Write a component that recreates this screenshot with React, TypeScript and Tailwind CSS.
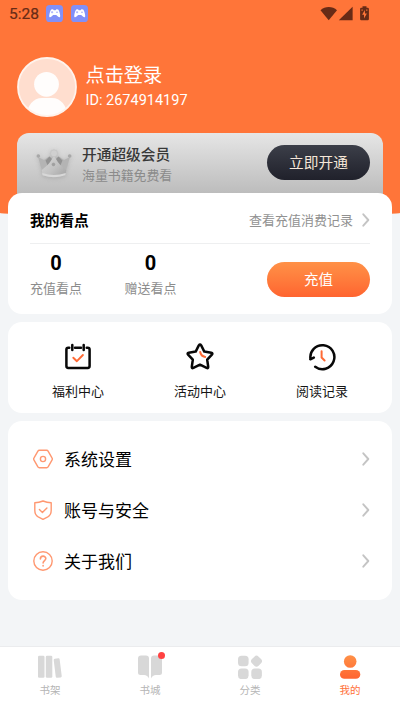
import React from 'react';

function Gamepad() {
  return (
    <svg className="size-[17px]" viewBox="0 0 17 17">
      <rect width="17" height="17" rx="3.6" fill="#8190f8" />
      <path
        d="M5.2 4.4 7 4.3l.8.9h1.8l.8-.9 1.8.1c1 1.500 2 4.500 2 6.600 0 1.500-1.200 1.500-2 .8l-2-1.900H7.200l-2 1.900c-.8.7-2 .7-2-.8 0-2.100 1-5.100 2-6.600Z"
        fill="#fff"
      />
      <path d="M5 7.200h2.200M6.100 6.100v2.200" stroke="#8190f8" strokeWidth=".6" />
      <circle cx="11" cy="7.200" r=".7" fill="#8190f8" />
    </svg>
  );
}

function StatusBar() {
  return (
    <div className="flex h-[28px] items-center pl-[9px] pr-[30px] text-[#672b16]">
      <span className="w-[36.500px] text-[15.500px] leading-[28px] [-webkit-text-stroke:0.2px]">5:28</span>
      <div className="flex gap-[8px] pb-[2px]">
        <Gamepad />
        <Gamepad />
      </div>
      <svg className="ml-auto h-[16px] w-[50px]" viewBox="0 0 50 16" fill="currentColor">
        <path d="M.5 4.200C5-.2 12.500-.2 17 4.200L8.700 14.300Z" />
        <path d="M32.600.800V14.300H18.800Z" />
        <path d="M42.500.200h4v1.500h1.200q1.200 0 1.200 1.200v10.200q0 1.200-1.200 1.200h-6.500q-1.100 0-1.100-1.200V2.900q0-1.200 1.100-1.200h1.300Z" />
        <path d="m44.800 4-2.700 4.700h1.900v3.700l2.900-5H45Z" fill="#ff7539" />
        <path d="M41.500 3.500h1.200v1.200h-1.200zM46.200 3.500h1.200v1.200h-1.200z" fill="#ff7539" />
      </svg>
    </div>
  );
}

function Avatar() {
  return (
    <svg className="size-[60px] shrink-0" viewBox="0 0 60 60">
      <defs>
        <clipPath id="face">
          <circle cx="30" cy="30" r="29" />
        </clipPath>
      </defs>
      <circle cx="30" cy="30" r="29" fill="#ffdecf" />
      <g clipPath="url(#face)" fill="#fffdfc">
        <circle cx="29.500" cy="27.300" r="12.400" />
        <path d="M9 60c1-11 7-19 16-19h10c9 0 15 8 16 19Z" />
      </g>
      <circle cx="30" cy="30" r="29" fill="none" stroke="#fff3ec" strokeWidth="1.800" />
    </svg>
  );
}

function Crown() {
  return (
    <svg className="h-[36px] w-[40px] shrink-0 drop-shadow-[0_1px_2px_rgba(110,110,110,.3)]" viewBox="0 0 40 36">
      <defs>
        <linearGradient id="crownFront" x1="0" y1="0" x2="1" y2="1">
          <stop offset="0" stopColor="#dadada" />
          <stop offset=".55" stopColor="#c2c2c2" />
          <stop offset="1" stopColor="#a2a2a2" />
        </linearGradient>
      </defs>
      <path d="m4 12 6 3 5-3.500 5 2 5-2 5 3.500 6-3-4.500 15H8.500Z" fill="#b4b4b4" />
      <path d="m11.500 15.500 4-4 3.500 3.500-5 6.500ZM28.500 15.500l-4-4-3.500 3.500 5 6.500Z" fill="#939393" />
      <path d="M20 10C17.500 16.500 12.500 21.500 7.800 25l.7 5q11 4.500 23 0l.7-5C27.500 21.500 22.500 16.500 20 10Z" fill="url(#crownFront)" />
      <path d="M8.200 28q11.800 4.200 23.600 0l-.3 2.200q-11.500 4.200-23 0Z" fill="#d8d8d8" />
      <circle cx="20" cy="8.300" r="3.500" fill="#d0d0d0" stroke="#bfbfbf" strokeWidth=".6" />
      <circle cx="4.300" cy="11" r="1.800" fill="#a8a8a8" />
      <circle cx="35.700" cy="11" r="1.800" fill="#a8a8a8" />
      <circle cx="19.500" cy="19.500" r="2.200" fill="#a0a0a0" stroke="#d2d2d2" strokeWidth=".6" />
    </svg>
  );
}

function Chevron() {
  return (
    <svg className="h-[14px] w-[8px] shrink-0" viewBox="0 0 8 14" fill="none">
      <path d="m1.300 1.300 5 5.700-5 5.700" stroke="#c4c4c4" strokeWidth="1.900" strokeLinecap="round" strokeLinejoin="round" />
    </svg>
  );
}

const shortcuts = [
  {
    label: '福利中心',
    icon: (
      <>
        <path d="M5.300 4.700H4.300Q2.400 4.700 2.400 6.600v16.500q0 1.900 1.900 1.900h19.400q1.900 0 1.900-1.900V6.600q0-1.900-1.900-1.900h-1M11 4.700h6" />
        <path d="M8.300 2v5M19.700 2v5" />
        <path d="m9.300 14.700 3.600 3.500 6-6.200" stroke="#ff6a35" strokeWidth="1.900" />
      </>
    ),
  },
  {
    label: '活动中心',
    icon: (
      <>
        <path d="M12.800 2.400q1.200-1.700 2.400 0l3.100 6.200 6.900 1.100q2 .4.700 1.900l-4.700 5.100 1 7q.2 2-1.600 1.200L14 21.700l-6.600 3.200q-1.800.8-1.600-1.200l1-7-4.700-5.100q-1.300-1.500.7-1.900l6.900-1.100Z" />
        <path d="M14.200 9q.7 4.200 5 4.900" stroke="#ff6a35" strokeWidth="2" />
      </>
    ),
  },
  {
    label: '阅读记录',
    icon: (
      <>
        <path d="M2.500 16A12 12 0 1 1 7.200 23.800M2.300 16.300l3.500-1.700" />
        <path d="M13.600 8.200v6.300l3 3" stroke="#ff6a35" strokeWidth="2" />
      </>
    ),
  },
];

const settings = [
  {
    label: '系统设置',
    icon: (
      <>
        <path d="M6.300 1.300h7.400q.9 0 1.400.8l4 7.100q.5.800 0 1.600l-4 7.100q-.5.800-1.400.8H6.300q-.9 0-1.400-.8l-4-7.100q-.5-.8 0-1.600l4-7.100q.5-.8 1.400-.8Z" />
        <circle cx="10" cy="10" r="2.600" />
      </>
    ),
  },
  {
    label: '账号与安全',
    icon: (
      <>
        <path d="M10 1q4 1.700 8.200 1.700v7.600q0 4.700-3.400 6.600L10 19.300l-4.800-2.400q-3.400-1.900-3.400-6.600V2.700Q6 2.700 10 1Z" />
        <path d="m6.400 9.600 3 2.900 4.500-4.500" />
      </>
    ),
  },
  {
    label: '关于我们',
    icon: (
      <>
        <circle cx="10" cy="10" r="9.200" />
        <path d="M7.400 7.900c0-3.700 5.400-3.500 5.400-.3 0 2-2.700 2.100-2.700 4.400M10.100 14.600v.4" strokeWidth="1.600" />
      </>
    ),
  },
];

const tabs = [
  {
    label: '书架',
    icon: (
      <>
        <rect x="0" y=".8" width="6.500" height="22" rx="1.200" />
        <rect x="7.800" y=".8" width="6.500" height="22" rx="1.200" />
        <rect x="16.700" y="3.500" width="6" height="19.200" rx="1.200" transform="rotate(-7 19.700 13)" />
      </>
    ),
  },
  {
    label: '书城',
    badge: true,
    icon: (
      <path d="M3 .5h5q3 0 3 3v20q-1.500-3.500-5-3.500H2.500Q0 20 0 17.500V3.500q0-3 3-3ZM13 3.500q0-3 3-3h5q3 0 3 3v14q0 2.500-2.500 2.500H18q-3.500 0-5 3.500Z" />
    ),
  },
  {
    label: '分类',
    icon: (
      <>
        <rect x="0" y=".7" width="10.600" height="10.600" rx="3.500" />
        <rect x="13.800" y="1.500" width="9.400" height="9.400" rx="3" transform="rotate(45 18.500 6.200)" />
        <rect x="0" y="13.500" width="10.600" height="10.600" rx="3.500" />
        <rect x="13.300" y="13.500" width="10.600" height="10.600" rx="3.500" />
      </>
    ),
  },
  {
    label: '我的',
    active: true,
    icon: (
      <>
        <defs>
          <linearGradient id="person" x1="0" y1="0" x2="0" y2="24" gradientUnits="userSpaceOnUse">
            <stop stopColor="#ff9147" />
            <stop offset="1" stopColor="#ff6430" />
          </linearGradient>
        </defs>
        <circle cx="12.200" cy="6.500" r="6.300" fill="url(#person)" />
        <rect x="2" y="15" width="20.300" height="8.800" rx="4.400" fill="url(#person)" />
      </>
    ),
  },
];

export default function App() {
  return (
    <div className="flex h-[711px] w-[400px] flex-col overflow-hidden bg-[#f3f5f7] font-['Roboto','Noto_Sans_CJK_SC',sans-serif] text-black">
      <header className="h-[214.500px] shrink-0 rounded-b-[50%_2px] bg-[#ff7539]">
        <StatusBar />
        <section className="flex h-[105px] pl-[17px] pt-[29px] text-white">
          <Avatar />
          <div className="pl-[8.500px] pt-[6px]">
            <h1 className="h-[27px] text-[19.200px] leading-[25px]">点击登录</h1>
            <p className="text-[14.500px] leading-[21px]">ID: 2674914197</p>
          </div>
        </section>
        <section className="mx-[17px] flex h-[81px] rounded-t-[12px] bg-linear-to-b from-[#e6e6e6] to-[#bcbcbc] to-75% pl-[17px] pr-[13px] pt-[12px]">
          <Crown />
          <div className="pl-[8px]">
            <h2 className="text-[14.700px] font-medium leading-[20px] text-[#383838]">开通超级会员</h2>
            <p className="pt-[1px] text-[12.900px] leading-[19px] text-[#8b8b8b]">海量书籍免费看</p>
          </div>
          <button className="ml-auto h-[35px] w-[103px] rounded-full bg-linear-to-b from-[#3c3f49] to-[#20212b] pt-[2px] text-[14.700px] leading-[33px] text-[#f5e6d8]">
            立即开通
          </button>
        </section>
      </header>

      <main className="z-10 -mt-[22px] flex flex-1 flex-col gap-[8px] px-[8px]">
        <section className="h-[121.500px] rounded-[14px] bg-white px-[22px]">
          <div className="flex h-[51px] items-center border-b border-[#eeeff0] pt-[5px]">
            <h2 className="pt-[2px] text-[14.700px] font-bold">我的看点</h2>
            <span className="ml-auto pr-[9px] pt-px text-[13px] text-[#919191]">查看充值消费记录</span>
            <Chevron />
          </div>
          <div className="flex">
            {['充值看点', '赠送看点'].map((label) => (
              <div key={label} className="w-[94.500px] pt-[8px]">
                <div className="w-[52px] text-center text-[20px] font-bold leading-[22px]">0</div>
                <div className="pt-[5px] text-[13px] leading-[19px] text-[#8c8c8c]">{label}</div>
              </div>
            ))}
            <button className="ml-auto mt-[18px] h-[35px] w-[103px] rounded-full bg-linear-to-b from-[#ff9147] to-[#ff6430] pt-[2px] text-[14.500px] leading-[33px] text-white">
              充值
            </button>
          </div>
        </section>

        <section className="flex h-[90.500px] rounded-[14px] bg-white px-[9px]">
          {shortcuts.map(({ label, icon }) => (
            <div key={label} className="flex flex-1 flex-col items-center pt-[21px]">
              <svg
                className="size-[28px]"
                viewBox="0 0 28 28"
                fill="none"
                stroke="#080808"
                strokeWidth="2.500"
                strokeLinecap="round"
                strokeLinejoin="round"
              >
                {icon}
              </svg>
              <span className="pt-[11px] text-[13px] leading-[19px] text-[#151515]">{label}</span>
            </div>
          ))}
        </section>

        <section className="h-[179px] rounded-[14px] bg-white py-[13px] pl-[24.500px] pr-[22px]">
          {settings.map(({ label, icon }) => (
            <div key={label} className="flex h-[51px] items-center">
              <svg
                className="size-[20px]"
                viewBox="0 0 20 20"
                fill="none"
                stroke="#ff9871"
                strokeWidth="1.400"
                strokeLinecap="round"
                strokeLinejoin="round"
              >
                {icon}
              </svg>
              <span className="flex-1 pl-[11.500px] pt-[3px] text-[17px]">{label}</span>
              <Chevron />
            </div>
          ))}
        </section>
      </main>

      <nav className="flex h-[65.500px] shrink-0 border-t border-[#ebecee] bg-white">
        {tabs.map(({ label, icon, active, badge }) => (
          <div key={label} className={`flex flex-1 flex-col items-center pt-[8px] ${active ? 'text-[#ff7138]' : 'text-[#b5b5b5]'}`}>
            <div className="relative size-[24px]">
              <svg className="size-[24px]" viewBox="0 0 24 24" fill="#d8d8d8">
                {icon}
              </svg>
              {badge && <i className="absolute -right-[3px] -top-[3px] size-[7px] rounded-full bg-[#ff4242]" />}
            </div>
            <span className="pt-[4px] text-[10.500px] leading-[16px]">{label}</span>
          </div>
        ))}
      </nav>
    </div>
  );
}
